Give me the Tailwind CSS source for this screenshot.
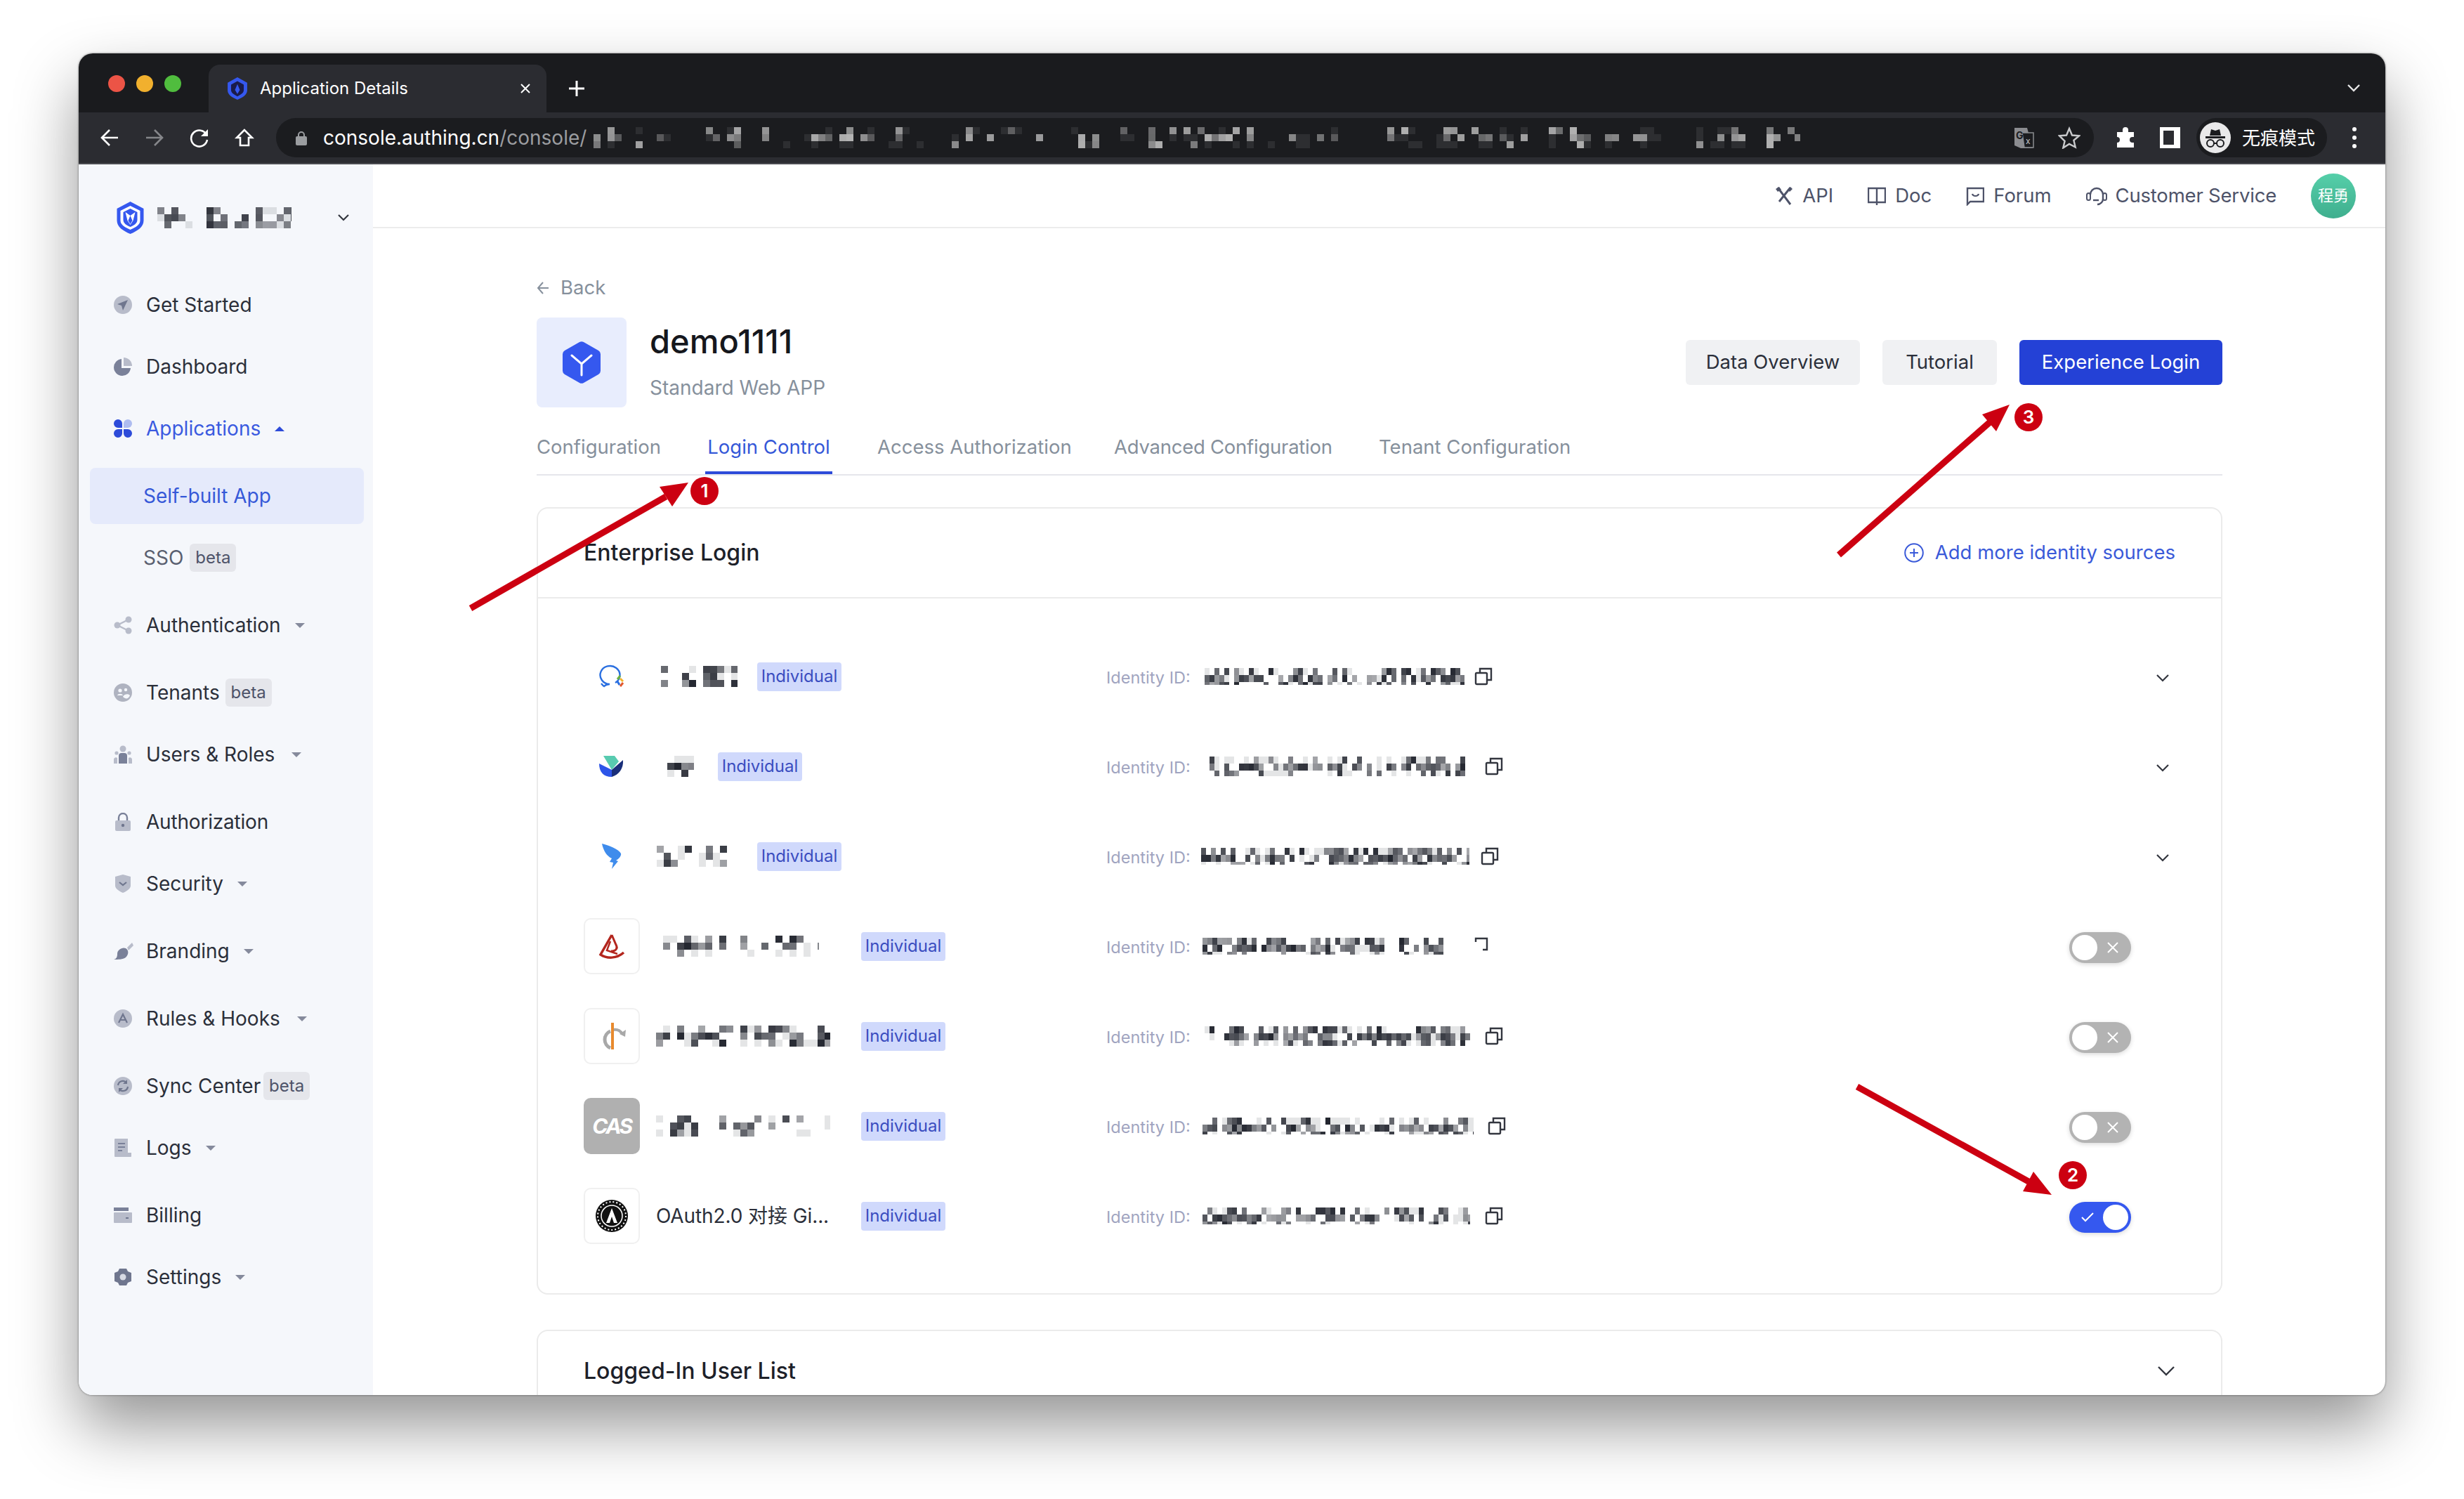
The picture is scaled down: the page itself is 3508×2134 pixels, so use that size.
<!DOCTYPE html>
<html lang="en">
  <head>
    <meta charset="UTF-8" />
    <title>Application Details</title>
    <script src="https://cdn.jsdelivr.net/npm/@tailwindcss/browser@4"></script>
  </head>
  <body class="relative w-[3508px] h-[2134px] bg-white overflow-hidden font-['Inter','Noto_Sans_CJK_SC',sans-serif]">
    <div class="absolute left-[112px] top-[76px] w-[3284px] h-[1910px] rounded-[20px] overflow-hidden flex flex-col bg-white shadow-[0_44px_90px_rgba(0,0,0,0.42),0_0_3px_rgba(0,0,0,0.5)]">

      <!-- browser tab strip -->
      <div class="h-[84px] shrink-0 bg-[#1a1b1e] flex items-end relative">
        <div class="flex gap-[16px] items-center ml-[42px] mb-[29px] w-[143px]">
          <div class="w-[24px] h-[24px] rounded-full bg-[#ec5446]"></div>
          <div class="w-[24px] h-[24px] rounded-full bg-[#f1b02e]"></div>
          <div class="w-[24px] h-[24px] rounded-full bg-[#50bd3e]"></div>
        </div>
        <div class="w-[481px] h-[68px] bg-[#2b2c31] rounded-t-[16px] flex items-center pl-[27px] text-white text-[24px]">
          <svg width="28" height="32" viewBox="0 0 40 46" class="mr-[18px] shrink-0"><path d="M20 0l20 11v16c0 9-10 15-20 19C10 42 0 36 0 27V11z" fill="#3558ef"/><path d="M20 8l13 7v11c0 6-6 10-13 13-7-3-13-7-13-13V15z" fill="#1a1b4a"/><path d="M20 14l5 12-5 8-5-8z" fill="#3558ef"/></svg>
          <span class="w-[371px]">Application Details</span>
          <svg width="14" height="14" viewBox="0 0 14 14"><path d="M1 1l12 12M13 1L1 13" stroke="#fff" stroke-width="2"/></svg>
        </div>
        <svg width="24" height="24" viewBox="0 0 24 24" class="ml-[31px] mb-[22px]"><path d="M12 1v22M1 12h22" stroke="#fff" stroke-width="3"/></svg>
        <svg width="18" height="11" viewBox="0 0 18 11" class="absolute right-[36px] top-[44px]"><path d="M1 1l8 8 8-8" stroke="#e6e6e6" stroke-width="2.4" fill="none"/></svg>
      </div>

      <!-- browser toolbar -->
      <div class="h-[74px] shrink-0 bg-[#2b2c31] border-b-2 border-[#4a4b50] flex items-center">
        <div class="flex items-center ml-[31px] w-[250px]">
          <svg width="26" height="26" viewBox="0 0 26 26"><path d="M25 13H3M13 2L2 13l11 11" stroke="#fff" stroke-width="2.6" fill="none"/></svg>
          <svg width="26" height="26" viewBox="0 0 26 26" class="ml-[38px]"><path d="M1 13h22M13 2l11 11-11 11" stroke="#85868a" stroke-width="2.6" fill="none"/></svg>
          <svg width="30" height="30" viewBox="0 0 30 30" class="ml-[36px]"><path d="M25 11a11.5 11.5 0 1 0 1 7" stroke="#fff" stroke-width="2.6" fill="none"/><path d="M27 3v10H17z" fill="#fff"/></svg>
          <svg width="28" height="28" viewBox="0 0 28 28" class="ml-[35px]"><path d="M14 3L3 14h5v11h12V14h5z" stroke="#fff" stroke-width="2.6" fill="none"/></svg>
        </div>
        <div class="w-[2588px] h-[56px] rounded-full bg-[#1b1c1f] flex items-center pl-[28px] text-[28px] relative">
          <svg width="16" height="21" viewBox="0 0 16 21" class="shrink-0"><path d="M4 9V6a4 4 0 0 1 8 0v3" stroke="#9b9da0" stroke-width="2" fill="none"/><rect x="0" y="8" width="16" height="13" rx="2" fill="#9b9da0"/></svg>
          <span class="ml-[23px] text-white">console.authing.cn<span class="text-[#9b9da0]">/console/</span></span>
          <svg width="1728" height="30" data-m="77" data-d="0.3" data-c="#b4b4b4" data-g="0.42" class="shrink-0"></svg>
          <svg width="30" height="30" viewBox="0 0 30 30" class="absolute left-[2474px] top-[13px]"><path d="M1 1h18l8 29H10L1 26z" fill="#8b8c90"/><path d="M12 8h16v21H15z" fill="#1b1c1f" stroke="#8b8c90" stroke-width="1.5"/><text x="3" y="17" font-size="14" font-weight="700" fill="#1b1c1f">G</text><text x="17" y="24" font-size="12" fill="#c6c7ca">x</text></svg>
          <svg width="32" height="32" viewBox="0 0 32 32" class="absolute left-[2537px] top-[12px]"><path d="M16 3l4 9.500 10 .8-7.600 6.500 2.300 9.700L16 25l-8.700 5.500 2.300-9.700L2 13.300l10-.8z" fill="none" stroke="#c9cacc" stroke-width="2.4"/></svg>
        </div>
        <svg width="30" height="30" viewBox="0 0 30 30" class="ml-[30px]"><path d="M11 4a4 4 0 0 1 8 0v3h8v7h-2a4 4 0 0 0 0 8h2v7H3v-7a4 4 0 0 0 0-8V7h8z" fill="#fff"/></svg>
        <div class="w-[29px] h-[30px] ml-[34px] bg-white p-[5px] pr-[9px]"><div class="w-full h-full bg-[#2b2c31]"></div></div>
        <div class="w-[186px] h-[56px] ml-[23px] rounded-full bg-[#1b1c1f] flex items-center pl-[5px] text-[26px] text-white">
          <svg width="44" height="44" viewBox="0 0 44 44" class="shrink-0"><circle cx="22" cy="22" r="22" fill="#e9e9ea"/><path d="M14 19l2-9 6 2 6-2 2 9z" fill="#1b1c1f"/><rect x="8" y="20" width="28" height="3" fill="#1b1c1f"/><circle cx="15" cy="30" r="5" fill="none" stroke="#1b1c1f" stroke-width="2"/><circle cx="29" cy="30" r="5" fill="none" stroke="#1b1c1f" stroke-width="2"/><path d="M20 30h4" stroke="#1b1c1f" stroke-width="2"/></svg>
          <span class="ml-[16px] whitespace-nowrap">无痕模式</span>
        </div>
        <div class="ml-[36px] flex flex-col gap-[6px]">
          <div class="w-[6px] h-[6px] rounded-full bg-white"></div>
          <div class="w-[6px] h-[6px] rounded-full bg-white"></div>
          <div class="w-[6px] h-[6px] rounded-full bg-white"></div>
        </div>
      </div>

      <div class="flex-1 flex min-h-0">
        <!-- sidebar -->
        <aside class="w-[419px] shrink-0 bg-[#f5f7fb] pt-[38px] text-[28px] text-[#2b2f3a]">
          <div class="h-[76px] flex items-center pl-[53px]">
            <svg width="41" height="46" viewBox="0 0 40 46" class="shrink-0"><path d="M20 0l19 10v17c0 9-9 15-19 19C10 42 1 36 1 27V10z" fill="#3558ef"/><path d="M20 6l14 7v14c0 6-7 10-14 13-7-3-14-7-14-13V13z" fill="#fff"/><path d="M20 10l10 5v11c0 5-5 8-10 10-5-2-10-5-10-10V15z" fill="#3558ef"/><path d="M13 15l7 5 7-5-3 12-4 6-4-6z" fill="#fff"/><path d="M20 20l3 7-3 5-3-5z" fill="#3558ef"/></svg>
            <svg width="191" height="30" data-m="31" data-d="0.42" data-c="#23262f" data-g="0.2" class="ml-[18px] shrink-0"></svg>
            <svg width="16" height="10" viewBox="0 0 16 10" class="ml-[66px]"><path d="M1 1l7 7 7-7" stroke="#33363f" stroke-width="2.2" fill="none"/></svg>
          </div>
          <nav class="mt-[42px] flex flex-col">
            <a class="h-[88px] pl-[50px] flex items-center gap-[20px]">
              <svg width="26" height="26" viewBox="0 0 26 26"><circle cx="13" cy="13" r="13" fill="#b8bcca"/><path d="M20 6L5 12l6 2 2 7z" fill="#6f768e"/></svg>
              Get Started
            </a>
            <a class="h-[88px] pl-[50px] flex items-center gap-[20px]">
              <svg width="26" height="26" viewBox="0 0 26 26"><path d="M11 2a12 12 0 1 0 13 13H11z" fill="#7a8199"/><path d="M14 0a12 12 0 0 1 12 12H14z" fill="#b8bcca"/></svg>
              Dashboard
            </a>
            <a class="h-[88px] pl-[50px] flex items-center gap-[20px] text-[#3a5ae0]">
              <svg width="26" height="26" viewBox="0 0 26 26"><path d="M6 0a6 6 0 0 1 6 6v6H6A6 6 0 0 1 6 0zM6 14h6v6a6 6 0 1 1-6-6zM14 14h6a6 6 0 1 1-6 6z" fill="#2d4bd9"/><path d="M20 0a6 6 0 0 1 0 12h-6V6a6 6 0 0 1 6-6z" fill="#aebcf0"/></svg>
              Applications
              <svg width="14" height="7" viewBox="0 0 14 7"><path d="M0 7h14L7 0z" fill="#2d4bd9"/></svg>
            </a>
            <div class="h-[88px] mt-[8px] flex items-center pl-[16px]">
              <a class="w-[390px] h-[80px] rounded-[8px] bg-[#e5eafb] flex items-center pl-[76px] text-[#3558d8]">Self-built App</a>
            </div>
            <a class="h-[88px] pl-[92px] flex items-center text-[#5a6070]">
              SSO
              <span class="ml-[9px] h-[40px] w-[66px] rounded-[6px] bg-[#e5e6eb] text-[#4e5369] text-[24px] flex items-center justify-center">beta</span>
            </a>
            <a class="h-[88px] mt-[8px] pl-[50px] flex items-center gap-[20px]">
              <svg width="26" height="26" viewBox="0 0 26 26"><path d="M21 5L5 13l16 8" stroke="#b8bcca" stroke-width="2.400" fill="none"/><circle cx="5" cy="13" r="4.500" fill="#b8bcca"/><circle cx="21" cy="5" r="4.500" fill="#b8bcca"/><circle cx="21" cy="21" r="4.500" fill="#b8bcca"/></svg>
              Authentication
              <svg width="14" height="7" viewBox="0 0 14 7"><path d="M0 0h14L7 7z" fill="#858a9c"/></svg>
            </a>
            <a class="h-[88px] mt-[8px] pl-[50px] flex items-center gap-[20px]">
              <svg width="26" height="26" viewBox="0 0 26 26"><circle cx="13" cy="13" r="13" fill="#afb3c0"/><circle cx="9" cy="10" r="2.600" fill="#f5f7fb"/><circle cx="17" cy="9" r="2.200" fill="#f5f7fb"/><path d="M5 17c1-3 7-3 8 0zM13 19c1-4 8-5 10-2-2 5-6 6-10 2z" fill="#f5f7fb"/></svg>
              Tenants
              <span class="ml-[-12px] h-[40px] w-[66px] rounded-[6px] bg-[#e5e6eb] text-[#4e5369] text-[24px] flex items-center justify-center">beta</span>
            </a>
            <a class="h-[88px] pl-[50px] flex items-center gap-[20px]">
              <svg width="26" height="26" viewBox="0 0 26 26"><circle cx="13" cy="5" r="4.500" fill="#b8bcca"/><path d="M7 26V15a4 4 0 0 1 4-4h4a4 4 0 0 1 4 4v11z" fill="#7a8199"/><circle cx="4" cy="11" r="2.600" fill="#b8bcca"/><circle cx="22" cy="11" r="2.600" fill="#b8bcca"/><path d="M0 26v-6a3 3 0 0 1 5-2v8zM26 26v-6a3 3 0 0 0-5-2v8z" fill="#b8bcca"/></svg>
              Users &amp; Roles
              <svg width="14" height="7" viewBox="0 0 14 7" class="ml-[4px]"><path d="M0 0h14L7 7z" fill="#858a9c"/></svg>
            </a>
            <a class="h-[88px] mt-[8px] pl-[50px] flex items-center gap-[20px] tracking-[-0.2px]">
              <svg width="26" height="26" viewBox="0 0 26 26"><path d="M7 12V7a6 6 0 0 1 12 0v5" stroke="#7a8199" stroke-width="2.400" fill="none"/><rect x="2" y="11" width="22" height="15" rx="2" fill="#b8bcca"/><circle cx="13" cy="18" r="2.200" fill="#6f768e"/></svg>
              Authorization
            </a>
            <a class="h-[88px] pl-[50px] flex items-center gap-[20px]">
              <svg width="26" height="26" viewBox="0 0 26 26"><path d="M13 0l11 3v13c0 4-6 8-11 10C8 24 2 20 2 16V3z" fill="#b8bcca"/><path d="M8 11l5 4 5-4" stroke="#6f768e" stroke-width="2.200" fill="none"/></svg>
              Security
              <svg width="14" height="7" viewBox="0 0 14 7"><path d="M0 0h14L7 7z" fill="#858a9c"/></svg>
            </a>
            <a class="h-[88px] mt-[8px] pl-[50px] flex items-center gap-[20px]">
              <svg width="28" height="26" viewBox="0 0 28 26" class="mr-[-2px]"><path d="M19 8l7-7 2 4-7 7z" fill="#b8bcca"/><path d="M0 25c4-1 5-4 5-8 0-6 7-10 12-8 5 3 4 9 0 13-4 3-11 3-17 3z" fill="#7a8199"/></svg>
              Branding
              <svg width="14" height="7" viewBox="0 0 14 7"><path d="M0 0h14L7 7z" fill="#858a9c"/></svg>
            </a>
            <a class="h-[88px] mt-[8px] pl-[50px] flex items-center gap-[20px]">
              <svg width="26" height="26" viewBox="0 0 26 26"><circle cx="13" cy="13" r="13" fill="#b8bcca"/><path d="M7 19l6-12 6 12M9.500 15h7" stroke="#6f768e" stroke-width="2.200" fill="none"/></svg>
              Rules &amp; Hooks
              <svg width="14" height="7" viewBox="0 0 14 7" class="ml-[4px]"><path d="M0 0h14L7 7z" fill="#858a9c"/></svg>
            </a>
            <a class="h-[88px] mt-[8px] pl-[50px] flex items-center gap-[20px]">
              <svg width="26" height="26" viewBox="0 0 26 26"><circle cx="13" cy="13" r="13" fill="#b8bcca"/><path d="M6 12a7 7 0 0 1 12-4M20 14a7 7 0 0 1-12 4" stroke="#6f768e" stroke-width="2.200" fill="none"/><path d="M19 4v6h-6zM7 22v-6h6z" fill="#6f768e"/></svg>
              Sync Center
              <span class="ml-[-16px] h-[40px] w-[66px] rounded-[6px] bg-[#e5e6eb] text-[#4e5369] text-[24px] flex items-center justify-center">beta</span>
            </a>
            <a class="h-[88px] pl-[50px] flex items-center gap-[20px]">
              <svg width="26" height="26" viewBox="0 0 26 26"><path d="M2 0h18v26H2a1 1 0 0 1-1-1V1a1 1 0 0 1 1-1z" fill="#b8bcca"/><path d="M20 20h5v5a1 1 0 0 1-1 1h-4z" fill="#b8bcca"/><path d="M6 7h10M6 12h10M6 17h6" stroke="#7a8199" stroke-width="2"/></svg>
              Logs
              <svg width="14" height="7" viewBox="0 0 14 7"><path d="M0 0h14L7 7z" fill="#858a9c"/></svg>
            </a>
            <a class="h-[88px] mt-[8px] pl-[50px] flex items-center gap-[20px]">
              <svg width="26" height="26" viewBox="0 0 26 26"><rect x="0" y="2" width="21" height="5" fill="#7a8199"/><rect x="0" y="9" width="26" height="15" fill="#b8bcca" rx="1"/><rect x="17" y="16" width="4" height="2" fill="#6f768e"/></svg>
              Billing
            </a>
            <a class="h-[88px] pl-[50px] flex items-center gap-[20px]">
              <svg width="26" height="26" viewBox="0 0 26 26"><path d="M8 1h10l2 4 5 2v12l-5 2-2 4H8l-2-4-5-2V7l5-2z" fill="#6f768e"/><circle cx="13" cy="13" r="4.500" fill="#d8dbe4"/></svg>
              Settings
              <svg width="14" height="7" viewBox="0 0 14 7"><path d="M0 0h14L7 7z" fill="#858a9c"/></svg>
            </a>
          </nav>
        </aside>

        <!-- main column -->
        <div class="flex-1 min-w-0 flex flex-col text-[27.5px]">
          <header class="h-[91px] shrink-0 border-b-2 border-[#ececec] flex items-center justify-end gap-[49px] pr-[42px] text-[#4e5369]">
            <a class="flex items-center gap-[13px]">
              <svg width="26" height="28" viewBox="0 0 26 28"><path d="M4 2l18 24M22 2L6 22" stroke="#4e5369" stroke-width="3" fill="none"/><path d="M1 4l5-3 3 4-5 3zM19 6l3-5 3 3-4 4z" fill="#4e5369"/></svg>API
            </a>
            <a class="flex items-center gap-[13px]">
              <svg width="26" height="28" viewBox="0 0 26 28"><path d="M1 3h24v20H1zM13 3v24M1 23h24" stroke="#4e5369" stroke-width="2.400" fill="none"/></svg>Doc
            </a>
            <a class="flex items-center gap-[13px]">
              <svg width="26" height="28" viewBox="0 0 26 28"><path d="M2 3h23v19H6l-4 4z" stroke="#4e5369" stroke-width="2.400" fill="none"/><path d="M9 11c1 4 8 4 9 0" stroke="#4e5369" stroke-width="2.200" fill="none"/></svg>Forum
            </a>
            <a class="flex items-center gap-[12px] tracking-[-0.2px]">
              <svg width="30" height="30" viewBox="0 0 30 30"><path d="M6 13a9 9 0 0 1 18 0v6a8 8 0 0 1-8 8" stroke="#4e5369" stroke-width="2.400" fill="none"/><rect x="1" y="11" width="5" height="10" rx="2.500" stroke="#4e5369" stroke-width="2" fill="none"/><rect x="24" y="11" width="5" height="10" rx="2.500" stroke="#4e5369" stroke-width="2" fill="none"/><path d="M10 21h8" stroke="#4e5369" stroke-width="2.400"/></svg>Customer Service
            </a>
            <div class="w-[64px] h-[64px] rounded-full bg-gradient-to-b from-[#55cfa9] to-[#3fae8e] text-white text-[22px] flex items-center justify-center">程勇</div>
          </header>

          <main class="flex-1 min-h-0 pl-[233px] pr-[232px] pt-[67px]">
            <a class="h-[36px] flex items-center gap-[16px] text-[#86909c]">
              <svg width="18" height="20" viewBox="0 0 18 20"><path d="M17 10H2M9 2L2 10l7 8" stroke="#86909c" stroke-width="2" fill="none"/></svg>Back
            </a>

            <div class="mt-[24px] h-[128px] flex items-center">
              <div class="w-[128px] h-[128px] rounded-[8px] bg-[#e8edfd] flex items-center justify-center">
                <svg width="54" height="60" viewBox="0 0 54 60"><path d="M24 1a6 6 0 0 1 6 0l21 12a6 6 0 0 1 3 5v24a6 6 0 0 1-3 5L30 59a6 6 0 0 1-6 0L3 47a6 6 0 0 1-3-5V18a6 6 0 0 1 3-5z" fill="#3558ef"/><path d="M13 20l14 12 14-12M27 32v16" stroke="#fff" stroke-width="3" fill="none" stroke-linecap="round"/></svg>
              </div>
              <div class="ml-[33px] flex-1">
                <h1 class="text-[47px] leading-[56px] font-medium text-[#15171d] mt-[-5px]">demo1111</h1>
                <p class="mt-[20px] leading-[36px] text-[28px] text-[#86909c]">Standard Web APP</p>
              </div>
              <div class="flex gap-[32px] h-[64px]">
                <button class="w-[248px] rounded-[6px] bg-[#f0f1f3] text-[#2b2f3a]">Data Overview</button>
                <button class="w-[163px] rounded-[6px] bg-[#f0f1f3] text-[#2b2f3a]">Tutorial</button>
                <button class="w-[289px] rounded-[6px] bg-[#2441d6] text-white">Experience Login</button>
              </div>
            </div>

            <div class="mt-[22px] h-[75px] border-b-2 border-[#e5e6eb] flex gap-[64px] text-[#86909c] whitespace-nowrap">
              <a class="w-[176px] h-[73px] pb-[4px] flex items-center">Configuration</a>
              <a class="w-[181px] h-[73px] pb-0 flex items-center justify-center border-b-4 border-[#2d4bd9] text-[#3558d8]">Login Control</a>
              <a class="w-[273px] h-[73px] pb-[4px] flex items-center">Access Authorization</a>
              <a class="w-[313px] h-[73px] pb-[4px] flex items-center tracking-[-0.25px]">Advanced Configuration</a>
              <a class="w-[276px] h-[73px] pb-[4px] flex items-center">Tenant Configuration</a>
            </div>

            <section class="mt-[45px] border-2 border-[#ebebeb] rounded-[16px]">
              <div class="h-[128px] border-b-2 border-[#ebebeb] flex items-center justify-between pl-[65px] pr-[65px]">
                <h2 class="text-[32px] font-medium text-[#1d2129]">Enterprise Login</h2>
                <a class="flex items-center gap-[16px] text-[#3a5ad9]">
                  <svg width="28" height="28" viewBox="0 0 28 28"><circle cx="14" cy="14" r="12.800" stroke="#3a5ad9" stroke-width="2" fill="none"/><path d="M14 8v12M8 14h12" stroke="#3a5ad9" stroke-width="2"/></svg>
                  Add more identity sources
                </a>
              </div>

              <div class="pt-[47px] pb-[46px]">
                <!-- row 1 -->
                <div class="h-[128px] flex items-center pl-[65px] pr-[74px]">
                  <div class="w-[744px] flex items-center">
                    <div class="w-[80px] h-[80px] flex items-center justify-center">
                      <svg width="42" height="34" viewBox="0 0 42 34"><path d="M26 26a14 13 0 1 0-8 2c-3 0-6 1-8 3-2-1-3-3-4-4" stroke="#2a6fe0" stroke-width="2.400" fill="none"/><path d="M33 16l-4 5" stroke="#6cb33f" stroke-width="3"/><path d="M37 24l-4-4" stroke="#f3b22a" stroke-width="3"/><path d="M33 31l4-5" stroke="#e2582c" stroke-width="3"/><path d="M29 24l3 5" stroke="#2a6fe0" stroke-width="3"/></svg>
                    </div>
                    <svg width="109" height="30" data-m="101" data-d="0.5" data-c="#23262f" data-g="0.15" class="ml-[30px]"></svg>
                    <span class="ml-[28px] w-[120px] h-[41px] rounded-[4px] bg-[#d0d9fc] text-[#3a4dc0] text-[24px] flex items-center justify-center">Individual</span>
                  </div>
                  <div class="flex-1 flex items-center">
                    <span class="w-[140px] text-[23.5px] text-[#a0a4c0] pt-[4px]">Identity ID:</span>
                    <svg width="370" height="24" data-m="211" data-d="0.55" data-s="7" data-c="#23262f" data-g="0.06"></svg>
                    <svg width="26" height="26" viewBox="0 0 26 26" class="ml-[14px]"><path d="M8 7V2h16v16h-6" stroke="#33363f" stroke-width="2.400" fill="none"/><rect x="2" y="8" width="16" height="16" rx="1.500" stroke="#33363f" stroke-width="2.400" fill="none"/></svg>
                  </div>
                  <div class="w-[142px] flex justify-end mt-[4px]">
                    <svg width="18" height="11" viewBox="0 0 18 11"><path d="M1 1l8 8 8-8" stroke="#33363f" stroke-width="2.200" fill="none"/></svg>
                  </div>
                </div>
                <!-- row 2 -->
                <div class="h-[128px] flex items-center pl-[65px] pr-[74px]">
                  <div class="w-[744px] flex items-center">
                    <div class="w-[80px] h-[80px] flex items-center justify-center">
                      <svg width="36" height="30" viewBox="0 0 36 30"><path d="M6 0h16l6 8-10 12z" fill="#58cbb0"/><path d="M34 6c1 12-6 21-16 24V20z" fill="#1a2f7a"/><path d="M0 11l18 9v10C6 30 0 23 0 11z" fill="#2d55e8"/></svg>
                    </div>
                    <svg width="38" height="30" data-m="307" data-d="0.6" data-c="#23262f" data-g="0.1" class="ml-[39px]"></svg>
                    <span class="ml-[34px] w-[120px] h-[41px] rounded-[4px] bg-[#d0d9fc] text-[#3a4dc0] text-[24px] flex items-center justify-center">Individual</span>
                  </div>
                  <div class="flex-1 flex items-center">
                    <span class="w-[140px] text-[23.5px] text-[#a0a4c0] pt-[4px]">Identity ID:</span>
                    <svg width="378" height="28" data-m="419" data-d="0.55" data-s="7" data-c="#23262f" data-g="0.06"></svg>
                    <svg width="26" height="26" viewBox="0 0 26 26" class="ml-[21px]"><path d="M8 7V2h16v16h-6" stroke="#33363f" stroke-width="2.400" fill="none"/><rect x="2" y="8" width="16" height="16" rx="1.500" stroke="#33363f" stroke-width="2.400" fill="none"/></svg>
                  </div>
                  <div class="w-[142px] flex justify-end mt-[4px]">
                    <svg width="18" height="11" viewBox="0 0 18 11"><path d="M1 1l8 8 8-8" stroke="#33363f" stroke-width="2.200" fill="none"/></svg>
                  </div>
                </div>
                <!-- row 3 -->
                <div class="h-[128px] flex items-center pl-[65px] pr-[74px]">
                  <div class="w-[744px] flex items-center">
                    <div class="w-[80px] h-[80px] flex items-center justify-center">
                      <svg width="28" height="36" viewBox="0 0 28 36"><path d="M0 0c9 2 24 8 27 14 1 3-3 8-7 10l3 1-9 11 2-9-5-1 3-5C7 18 2 10 0 0z" fill="#3f8cec"/></svg>
                    </div>
                    <svg width="107" height="30" data-m="523" data-d="0.4" data-c="#23262f" data-g="0.15" class="ml-[24px]"></svg>
                    <span class="ml-[36px] w-[120px] h-[41px] rounded-[4px] bg-[#d0d9fc] text-[#3a4dc0] text-[24px] flex items-center justify-center">Individual</span>
                  </div>
                  <div class="flex-1 flex items-center">
                    <span class="w-[135px] text-[23.5px] text-[#a0a4c0] pt-[4px]">Identity ID:</span>
                    <svg width="382" height="24" data-m="631" data-d="0.6" data-s="7" data-c="#23262f" data-g="0.06"></svg>
                    <svg width="26" height="26" viewBox="0 0 26 26" class="ml-[16px]"><path d="M8 7V2h16v16h-6" stroke="#33363f" stroke-width="2.400" fill="none"/><rect x="2" y="8" width="16" height="16" rx="1.500" stroke="#33363f" stroke-width="2.400" fill="none"/></svg>
                  </div>
                  <div class="w-[142px] flex justify-end mt-[4px]">
                    <svg width="18" height="11" viewBox="0 0 18 11"><path d="M1 1l8 8 8-8" stroke="#33363f" stroke-width="2.200" fill="none"/></svg>
                  </div>
                </div>
                <!-- row 4 -->
                <div class="h-[128px] flex items-center pl-[65px] pr-[74px]">
                  <div class="w-[744px] flex items-center">
                    <div class="w-[80px] h-[80px] rounded-[10px] border-2 border-[#f0f0f0] flex items-center justify-center">
                      <svg width="38" height="36" viewBox="0 0 38 36"><path d="M19 2L3 30c9 6 23 6 33-3" stroke="#b3261e" stroke-width="3.500" fill="none"/><path d="M19 2l6 14c3 5 0 9-7 9" stroke="#b3261e" stroke-width="3" fill="none"/><path d="M17 11l-5 13 15 5" stroke="#b3261e" stroke-width="2.500" fill="none"/></svg>
                    </div>
                    <svg width="232" height="30" data-m="733" data-d="0.35" data-c="#23262f" data-g="0.18" class="ml-[23px]"></svg>
                    <span class="ml-[60px] w-[120px] h-[41px] rounded-[4px] bg-[#d0d9fc] text-[#3a4dc0] text-[24px] flex items-center justify-center">Individual</span>
                  </div>
                  <div class="flex-1 flex items-center">
                    <span class="w-[137px] text-[23.5px] text-[#a0a4c0] pt-[4px]">Identity ID:</span>
                    <svg width="350" height="24" data-m="839" data-d="0.55" data-s="7" data-c="#23262f" data-g="0.08"></svg>
                    <svg width="26" height="26" viewBox="0 0 26 26" class="ml-[31px]"><path d="M8 7V2h16v16h-6" stroke="#33363f" stroke-width="2.400" fill="none"/></svg>
                  </div>
                  <div class="w-[142px] flex mt-[4px]">
                    <div class="relative w-[88px] h-[44px] rounded-full bg-[#b3b3b3] shadow-[0_2px_6px_rgba(0,0,0,0.15)]">
                      <div class="absolute left-[4px] top-[4px] w-[36px] h-[36px] rounded-full bg-white"></div>
                      <svg width="16" height="16" viewBox="0 0 16 16" class="absolute left-[54px] top-[14px]"><path d="M1 1l14 14M15 1L1 15" stroke="#fff" stroke-width="2"/></svg>
                    </div>
                  </div>
                </div>
                <!-- row 5 -->
                <div class="h-[128px] flex items-center pl-[65px] pr-[74px]">
                  <div class="w-[744px] flex items-center">
                    <div class="w-[80px] h-[80px] rounded-[10px] border-2 border-[#f0f0f0] flex items-center justify-center">
                      <svg width="44" height="40" viewBox="0 0 44 40"><path d="M20 37a13 13 0 0 1 0-24" stroke="#a8a8a8" stroke-width="5" fill="none"/><path d="M24 11c6-1 10 1 13 6" stroke="#a8a8a8" stroke-width="4" fill="none"/><path d="M42 11l-1 10-8-4z" fill="#a8a8a8"/><path d="M23 1v38" stroke="#e88a2e" stroke-width="4"/></svg>
                    </div>
                    <svg width="248" height="30" data-m="947" data-d="0.45" data-c="#23262f" data-g="0.12" class="ml-[23px]"></svg>
                    <span class="ml-[44px] w-[120px] h-[41px] rounded-[4px] bg-[#d0d9fc] text-[#3a4dc0] text-[24px] flex items-center justify-center">Individual</span>
                  </div>
                  <div class="flex-1 flex items-center">
                    <span class="w-[140px] text-[23.5px] text-[#a0a4c0] pt-[4px]">Identity ID:</span>
                    <svg width="378" height="28" data-m="1051" data-d="0.55" data-s="7" data-c="#23262f" data-g="0.06"></svg>
                    <svg width="26" height="26" viewBox="0 0 26 26" class="ml-[21px]"><path d="M8 7V2h16v16h-6" stroke="#33363f" stroke-width="2.400" fill="none"/><rect x="2" y="8" width="16" height="16" rx="1.500" stroke="#33363f" stroke-width="2.400" fill="none"/></svg>
                  </div>
                  <div class="w-[142px] flex mt-[4px]">
                    <div class="relative w-[88px] h-[44px] rounded-full bg-[#b3b3b3] shadow-[0_2px_6px_rgba(0,0,0,0.15)]">
                      <div class="absolute left-[4px] top-[4px] w-[36px] h-[36px] rounded-full bg-white"></div>
                      <svg width="16" height="16" viewBox="0 0 16 16" class="absolute left-[54px] top-[14px]"><path d="M1 1l14 14M15 1L1 15" stroke="#fff" stroke-width="2"/></svg>
                    </div>
                  </div>
                </div>
                <!-- row 6 -->
                <div class="h-[128px] flex items-center pl-[65px] pr-[74px]">
                  <div class="w-[744px] flex items-center">
                    <div class="w-[80px] h-[80px] rounded-[10px] bg-[#b0b0b0] flex items-center justify-center text-white text-[30px] font-bold italic tracking-[-2.500px]">CAS</div>
                    <svg width="248" height="30" data-m="1153" data-d="0.38" data-c="#23262f" data-g="0.15" class="ml-[23px]"></svg>
                    <span class="ml-[44px] w-[120px] h-[41px] rounded-[4px] bg-[#d0d9fc] text-[#3a4dc0] text-[24px] flex items-center justify-center">Individual</span>
                  </div>
                  <div class="flex-1 flex items-center">
                    <span class="w-[137px] text-[23.5px] text-[#a0a4c0] pt-[4px]">Identity ID:</span>
                    <svg width="386" height="24" data-m="1259" data-d="0.55" data-s="7" data-c="#23262f" data-g="0.05"></svg>
                    <svg width="26" height="26" viewBox="0 0 26 26" class="ml-[20px]"><path d="M8 7V2h16v16h-6" stroke="#33363f" stroke-width="2.400" fill="none"/><rect x="2" y="8" width="16" height="16" rx="1.500" stroke="#33363f" stroke-width="2.400" fill="none"/></svg>
                  </div>
                  <div class="w-[142px] flex mt-[4px]">
                    <div class="relative w-[88px] h-[44px] rounded-full bg-[#b3b3b3] shadow-[0_2px_6px_rgba(0,0,0,0.15)]">
                      <div class="absolute left-[4px] top-[4px] w-[36px] h-[36px] rounded-full bg-white"></div>
                      <svg width="16" height="16" viewBox="0 0 16 16" class="absolute left-[54px] top-[14px]"><path d="M1 1l14 14M15 1L1 15" stroke="#fff" stroke-width="2"/></svg>
                    </div>
                  </div>
                </div>
                <!-- row 7 -->
                <div class="h-[128px] flex items-center pl-[65px] pr-[74px]">
                  <div class="w-[744px] flex items-center">
                    <div class="w-[80px] h-[80px] rounded-[10px] border-2 border-[#f0f0f0] flex items-center justify-center">
                      <svg width="46" height="46" viewBox="0 0 46 46"><circle cx="23" cy="23" r="23" fill="#111"/><circle cx="23" cy="23" r="20" fill="none" stroke="#fff" stroke-width="2" stroke-dasharray="2 3"/><circle cx="23" cy="23" r="15" fill="#111" stroke="#fff" stroke-width="1.500"/><path d="M15 33l8-21 8 21h-5l-3-9-3 9z" fill="#fff"/></svg>
                    </div>
                    <span class="ml-[23px] w-[264px] text-[28px] tracking-[-0.1px] text-[#2b2f3a] whitespace-nowrap">OAuth2.0 对接 Gi...</span>
                    <span class="ml-[28px] w-[120px] h-[41px] rounded-[4px] bg-[#d0d9fc] text-[#3a4dc0] text-[24px] flex items-center justify-center">Individual</span>
                  </div>
                  <div class="flex-1 flex items-center">
                    <span class="w-[137px] text-[23.5px] text-[#a0a4c0] pt-[4px]">Identity ID:</span>
                    <svg width="381" height="24" data-m="1361" data-d="0.55" data-s="7" data-c="#23262f" data-g="0.06"></svg>
                    <svg width="26" height="26" viewBox="0 0 26 26" class="ml-[21px]"><path d="M8 7V2h16v16h-6" stroke="#33363f" stroke-width="2.400" fill="none"/><rect x="2" y="8" width="16" height="16" rx="1.500" stroke="#33363f" stroke-width="2.400" fill="none"/></svg>
                  </div>
                  <div class="w-[142px] flex mt-[4px]">
                    <div class="relative w-[88px] h-[44px] rounded-full bg-[#3558ef] shadow-[0_2px_6px_rgba(0,0,0,0.15)]">
                      <svg width="18" height="14" viewBox="0 0 18 14" class="absolute left-[17px] top-[15px]"><path d="M1 7l5 5L17 1" stroke="#fff" stroke-width="2" fill="none"/></svg>
                      <div class="absolute right-[4px] top-[4px] w-[36px] h-[36px] rounded-full bg-white"></div>
                    </div>
                  </div>
                </div>
              </div>
            </section>

            <section class="mt-[50px] border-2 border-[#ebebeb] rounded-t-[16px] h-[200px]">
              <div class="h-[114px] flex items-center justify-between pl-[65px] pr-[66px]">
                <h2 class="text-[32px] font-medium text-[#1d2129]">Logged-In User List</h2>
                <svg width="24" height="14" viewBox="0 0 24 14"><path d="M1 1l11 11L23 1" stroke="#33363f" stroke-width="2.400" fill="none"/></svg>
              </div>
            </section>
          </main>
        </div>
      </div>
    </div>

    <!-- red annotations drawn over the screenshot -->
    <svg width="3508" height="2134" viewBox="0 0 3508 2134" class="absolute left-0 top-0 pointer-events-none">
      <line x1="670" y1="866" x2="948" y2="707" stroke="#cc0011" stroke-width="9"/>
      <path d="M980 687L939 693L957 721z" fill="#cc0011"/>
      <circle cx="1003" cy="699" r="20" fill="#cc0011"/>
      <text x="1003" y="708" text-anchor="middle" font-size="26" font-weight="600" fill="#fff">1</text>

      <line x1="2618" y1="790" x2="2833" y2="601" stroke="#cc0011" stroke-width="9"/>
      <path d="M2861 576L2822 590L2842 614z" fill="#cc0011"/>
      <circle cx="2888" cy="594" r="20" fill="#cc0011"/>
      <text x="2888" y="603" text-anchor="middle" font-size="26" font-weight="600" fill="#fff">3</text>

      <line x1="2644" y1="1547" x2="2888" y2="1682" stroke="#cc0011" stroke-width="9"/>
      <path d="M2921 1701L2895 1668L2880 1696z" fill="#cc0011"/>
      <circle cx="2951" cy="1673" r="20" fill="#cc0011"/>
      <text x="2951" y="1682" text-anchor="middle" font-size="26" font-weight="600" fill="#fff">2</text>
    </svg>

    <script>
      // pixelated (redacted) strings from the source screenshot
      document.querySelectorAll("svg[data-m]").forEach(function (svg) {
        var seed = +svg.dataset.m, d = +svg.dataset.d, g = +svg.dataset.g, c = svg.dataset.c, s = +svg.dataset.s || 10;
        var w = +svg.getAttribute("width"), h = +svg.getAttribute("height");
        var r = function () { seed = (seed * 16807) % 2147483647; return seed / 2147483647; };
        for (var i = 0; i < 20; i++) r();
        for (var x = 0; x < w; x += s) {
          var blank = r() < g;
          for (var y = 0; y < h; y += 10) {
            if (blank) continue;
            var mid = y > 0 && y + 10 < h;
            var o = r() < (mid ? d * 1.35 : d * 0.75) ? 0.4 + 0.6 * r() : r() < 0.3 ? 0.12 : 0;
            if (!o) continue;
            var rect = document.createElementNS("http://www.w3.org/2000/svg", "rect");
            rect.setAttribute("x", x); rect.setAttribute("y", y);
            rect.setAttribute("width", s); rect.setAttribute("height", 10);
            rect.setAttribute("fill", c); rect.setAttribute("fill-opacity", o);
            svg.appendChild(rect);
          }
        }
      });
    </script>
  </body>
</html>
